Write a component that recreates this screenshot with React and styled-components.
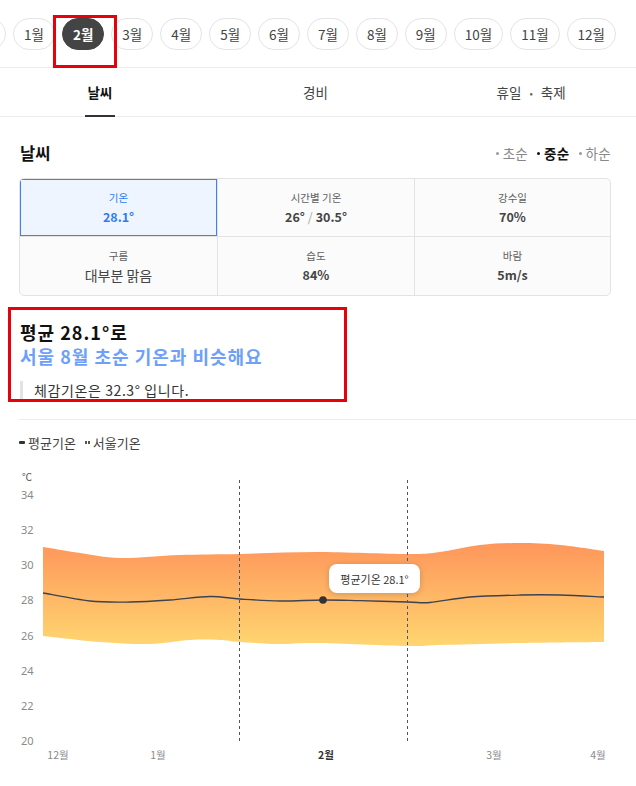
import React from "react";
import styled, { createGlobalStyle } from "styled-components";

const GlobalStyle = createGlobalStyle`
  html, body {
    margin: 0;
    padding: 0;
    background: #fff;
  }
  body {
    font-family: "Noto Sans CJK KR", "Noto Sans", sans-serif;
    color: #333;
    -webkit-font-smoothing: antialiased;
  }
`;

const Page = styled.div`
  position: relative;
  width: 636px;
  height: 786px;
  overflow: hidden;
  background: #fff;
`;

const MonthBar = styled.div`
  height: 68px;
  border-bottom: 1px solid #ececec;
  box-sizing: border-box;
  overflow: hidden;
`;

const MonthRow = styled.div`
  display: flex;
  gap: 7px;
  padding-top: 18px;
  margin-left: -34px;
`;

const MonthPill = styled.div`
  flex: none;
  height: 32px;
  min-width: ${(p) => (p.$ghost ? "40px" : "0")};
  box-sizing: border-box;
  padding: 0 10px;
  border-radius: 16px;
  display: flex;
  align-items: center;
  justify-content: center;
  font-size: 13.5px;
  border: 1px solid ${(p) => (p.$active ? "#444" : "#e4e4e4")};
  background: ${(p) => (p.$active ? "#444" : "#fff")};
  color: ${(p) => (p.$active ? "#fff" : "#444")};
  font-weight: ${(p) => (p.$active ? 700 : 400)};
`;

const Tabs = styled.div`
  display: grid;
  grid-template-columns: repeat(3, 1fr);
  margin: 0 -3px 0 -8px;
  height: 49px;
  border-bottom: 1px solid #ececec;
  box-sizing: border-box;
`;

const Tab = styled.div`
  display: flex;
  justify-content: center;
  align-items: center;
  position: relative;
  font-size: 13.5px;
  color: ${(p) => (p.$active ? "#111" : "#444")};
  font-weight: ${(p) => (p.$active ? 700 : 400)};

  &::after {
    content: "";
    display: ${(p) => (p.$active ? "block" : "none")};
    position: absolute;
    bottom: -1px;
    left: 50%;
    transform: translateX(-50%);
    width: 30px;
    height: 2px;
    background: #333;
  }
`;

const Dot = styled.span`
  margin: 0 8px;
  font-size: 10px;
  color: #666;
`;

const Section = styled.div`
  padding: 0 25px 0 19px;
`;

const HeadRow = styled.div`
  display: flex;
  justify-content: space-between;
  align-items: center;
  padding-top: 24px;
  height: 24px;
`;

const Title = styled.h2`
  margin: 0;
  font-size: 16.5px;
  font-weight: 700;
  color: #111;
  padding-left: 1px;
`;

const Periods = styled.div`
  display: flex;
  gap: 9px;
  font-size: 13.5px;
  letter-spacing: 0.3px;
`;

const Period = styled.span`
  display: flex;
  align-items: center;
  gap: 4px;
  color: ${(p) => (p.$active ? "#111" : "#888")};
  font-weight: ${(p) => (p.$active ? 700 : 400)};

  &::before {
    content: "";
    width: 3px;
    height: 3px;
    border-radius: 50%;
    background: ${(p) => (p.$active ? "#111" : "#999")};
  }
`;

const Table = styled.div`
  margin-top: 13px;
  display: grid;
  grid-template-columns: 198px 197px 1fr;
  grid-auto-rows: 58px;
  border: 1px solid #e3e3e3;
  border-radius: 5px;
  overflow: hidden;
  background: #fbfbfb;
`;

const Cell = styled.div`
  display: flex;
  flex-direction: column;
  align-items: center;
  justify-content: center;
  gap: 2px;
  border-right: ${(p) => (p.$last ? "none" : "1px solid #e3e3e3")};
  border-bottom: ${(p) => (p.$bottom ? "none" : "1px solid #e3e3e3")};
  background: ${(p) => (p.$active ? "#eef5ff" : "transparent")};
  box-shadow: ${(p) => (p.$active ? "inset 0 0 0 1px #3a82f5" : "none")};
  color: ${(p) => (p.$active ? "#2f7bf5" : "#444")};
`;

const CellLabel = styled.div`
  font-size: 10.5px;
  color: inherit;
  opacity: ${(p) => (p.$active ? 1 : 0.85)};
`;

const CellValue = styled.div`
  font-size: ${(p) => (p.$plain ? "14px" : "12.5px")};
  font-weight: ${(p) => (p.$plain ? 400 : 700)};
  color: inherit;
`;

const Slash = styled.span`
  color: #aaa;
  font-weight: 400;
  margin: 0 3px;
`;

const Summary = styled.div`
  padding-top: 24px;
  padding-left: 1px;
`;

const SummaryLine = styled.div`
  font-size: 18px;
  font-weight: 700;
  line-height: 24px;
  letter-spacing: 1px;
  color: ${(p) => (p.$accent ? "#6d9ffb" : "#111")};
`;

const Quote = styled.div`
  margin-top: 13px;
  border-left: 3px solid #e3e3e3;
  padding-left: 11px;
  font-size: 14px;
  line-height: 18px;
  letter-spacing: 0.6px;
  color: #333;
`;

const Divider = styled.div`
  margin: 20px -25px 0 0;
  height: 1px;
  background: #ececec;
`;

const Legend = styled.div`
  display: flex;
  gap: 9px;
  padding-top: 13px;
  font-size: 13px;
  color: #444;
  height: 18px;
  align-items: center;
`;

const LegendItem = styled.span`
  display: flex;
  align-items: center;
  gap: 3px;
`;

const SolidMark = styled.span`
  width: 6px;
  height: 3px;
  background: #333;
  border-radius: 1px;
`;

const DotMark = styled.span`
  display: flex;
  gap: 1px;

  &::before, &::after {
    content: "";
    width: 2px;
    height: 3px;
    background: #555;
  }
`;

const ChartWrap = styled.div`
  position: relative;
  margin: 9px -25px 0 -19px;
  height: 326px;
`;

const Tooltip = styled.div`
  position: absolute;
  left: 329px;
  top: 104px;
  width: 91px;
  height: 29px;
  box-sizing: border-box;
  background: #fff;
  border-radius: 8px;
  box-shadow: 0 1px 6px rgba(0, 0, 0, 0.18);
  display: flex;
  align-items: center;
  justify-content: center;
  font-size: 11px;
  color: #333;
  white-space: nowrap;
`;

const Marker = styled.div`
  position: absolute;
  border: 3px solid #e8000b;
  box-sizing: border-box;
  pointer-events: none;
`;

const months = ["1월", "2월", "3월", "4월", "5월", "6월", "7월", "8월", "9월", "10월", "11월", "12월"];

const cells = [
  { label: "기온", value: "28.1°", active: true },
  { label: "시간별 기온", value: "range" },
  { label: "강수일", value: "70%" },
  { label: "구름", value: "대부분 맑음", plain: true },
  { label: "습도", value: "84%" },
  { label: "바람", value: "5m/s" },
];

const topPts = [[43,547],[80,553],[120,558],[180,555],[240,554],[316,552],[408,554],[440,552],[480,545],[520,543],[560,545],[604,551]];
const botPts = [[43,636],[100,642],[150,644],[190,640],[220,640],[240,642],[280,644],[316,643],[408,646],[440,645],[520,643],[604,642]];
const linePts = [[43,593],[90,601],[130,602],[170,600],[210,596.5],[240,599],[280,601],[323,600],[360,600.7],[408,602],[430,602.5],[470,597],[520,595],[560,595],[604,597]];

// catmull-rom -> bezier
function smooth(pts, move = true) {
  let d = move ? `M${pts[0][0]},${pts[0][1]}` : `L${pts[0][0]},${pts[0][1]}`;
  for (let i = 0; i < pts.length - 1; i++) {
    const p0 = pts[i - 1] || pts[i];
    const p1 = pts[i];
    const p2 = pts[i + 1];
    const p3 = pts[i + 2] || p2;
    const c1x = p1[0] + (p2[0] - p0[0]) / 6;
    const c1y = p1[1] + (p2[1] - p0[1]) / 6;
    const c2x = p2[0] - (p3[0] - p1[0]) / 6;
    const c2y = p2[1] - (p3[1] - p1[1]) / 6;
    d += ` C${c1x},${c1y} ${c2x},${c2y} ${p2[0]},${p2[1]}`;
  }
  return d;
}

const bandPath = smooth(topPts) + " " + smooth([...botPts].reverse(), false) + " Z";
const linePath = smooth(linePts);

const yTicks = [34, 32, 30, 28, 26, 24, 22, 20];
const yOf = (v) => 741 - (v - 20) * 17.57;

const xTicks = [
  { x: 58, t: "12월" },
  { x: 158, t: "1월" },
  { x: 326, t: "2월", bold: true },
  { x: 494, t: "3월" },
  { x: 598, t: "4월" },
];

const Chart = () => (
  <svg width="636" height="326" viewBox="0 460 636 326" style={{ display: "block" }}>
    <defs>
      <linearGradient id="band" x1="0" y1="543" x2="0" y2="646" gradientUnits="userSpaceOnUse">
        <stop offset="0" stopColor="#fe965b" />
        <stop offset="1" stopColor="#ffd670" />
      </linearGradient>
    </defs>
    <text x="22" y="481" fontSize="10" fill="#555" fontFamily="Noto Sans CJK KR, sans-serif">℃</text>
    {yTicks.map((v) => (
      <text key={v} x="21" y={yOf(v) + 4} fontSize="11" fill="#8a8a8a" fontFamily="Noto Sans, sans-serif">
        {v}
      </text>
    ))}
    <path d={bandPath} fill="url(#band)" />
    <path d={linePath} fill="none" stroke="#3d4250" strokeWidth="1.3" />
    <line x1="239.5" y1="480" x2="239.5" y2="743" stroke="#555" strokeWidth="1" strokeDasharray="3 3" />
    <line x1="407.5" y1="480" x2="407.5" y2="743" stroke="#555" strokeWidth="1" strokeDasharray="3 3" />
    <circle cx="323" cy="600" r="3.8" fill="#333" />
    {xTicks.map((t) => (
      <text
        key={t.t + t.x}
        x={t.x}
        y="759"
        textAnchor="middle"
        fontSize="10.5"
        fill={t.bold ? "#333" : "#8a8a8a"}
        fontWeight={t.bold ? 700 : 400}
        fontFamily="Noto Sans CJK KR, sans-serif"
      >
        {t.t}
      </text>
    ))}
  </svg>
);

export default function App() {
  return (
    <Page>
      <GlobalStyle />
      <MonthBar>
        <MonthRow>
          <MonthPill $ghost aria-hidden="true" />
          {months.map((m, i) => (
            <MonthPill key={i} $active={i === 1}>
              {m}
            </MonthPill>
          ))}
        </MonthRow>
      </MonthBar>
      <Tabs>
        <Tab $active>날씨</Tab>
        <Tab>경비</Tab>
        <Tab>
          휴일<Dot>•</Dot>축제
        </Tab>
      </Tabs>
      <Section>
        <HeadRow>
          <Title>날씨</Title>
          <Periods>
            <Period>초순</Period>
            <Period $active>중순</Period>
            <Period>하순</Period>
          </Periods>
        </HeadRow>
        <Table>
          {cells.map((c, i) => (
            <Cell key={i} $active={c.active} $last={i % 3 === 2} $bottom={i >= 3}>
              <CellLabel $active={c.active}>{c.label}</CellLabel>
              <CellValue $plain={c.plain}>
                {c.value === "range" ? (
                  <>
                    26°<Slash>/</Slash>30.5°
                  </>
                ) : (
                  c.value
                )}
              </CellValue>
            </Cell>
          ))}
        </Table>
        <Summary>
          <SummaryLine>평균 28.1°로</SummaryLine>
          <SummaryLine $accent>서울 8월 초순 기온과 비슷해요</SummaryLine>
          <Quote>체감기온은 32.3° 입니다.</Quote>
        </Summary>
        <Divider />
        <Legend>
          <LegendItem>
            <SolidMark />
            평균기온
          </LegendItem>
          <LegendItem>
            <DotMark />
            서울기온
          </LegendItem>
        </Legend>
        <ChartWrap>
          <Chart />
          <Tooltip>평균기온 28.1°</Tooltip>
        </ChartWrap>
      </Section>
      <Marker style={{ left: 53, top: 15, width: 64, height: 53 }} />
      <Marker style={{ left: 8, top: 307, width: 339, height: 95 }} />
    </Page>
  );
}
